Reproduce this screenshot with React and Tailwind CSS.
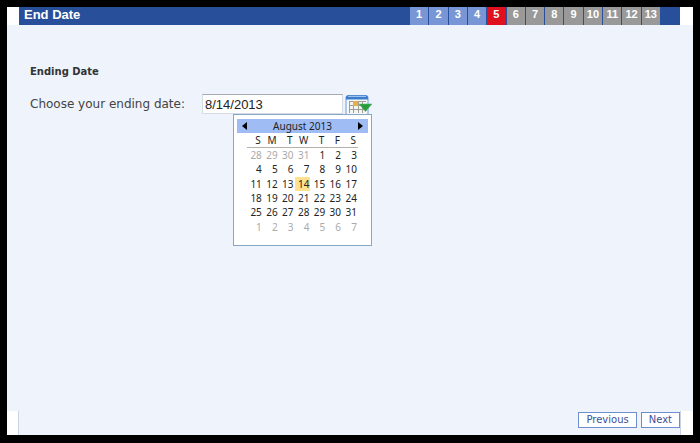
import { useState } from "react";

const STEPS = [1, 2, 3, 4, 5, 6, 7, 8, 9, 10, 11, 12, 13];
const CURRENT_STEP = 5;

const WEEKDAYS = ["S", "M", "T", "W", "T", "F", "S"];
const WEEKS = [
  [28, 29, 30, 31, 1, 2, 3],
  [4, 5, 6, 7, 8, 9, 10],
  [11, 12, 13, 14, 15, 16, 17],
  [18, 19, 20, 21, 22, 23, 24],
  [25, 26, 27, 28, 29, 30, 31],
  [1, 2, 3, 4, 5, 6, 7],
];

function stepColor(step) {
  if (step === CURRENT_STEP) return "bg-[#e0101f]";
  return step < CURRENT_STEP ? "bg-[#7896d5]" : "bg-[#999999]";
}

function isOutside(week, day) {
  return (week === 0 && day > 7) || week === 5;
}

function CalendarIcon() {
  return (
    <svg width="28" height="20" viewBox="0 0 28 20" aria-hidden="true">
      <rect x="1" y="1.5" width="22" height="21" rx="2" fill="#f4f8fd" stroke="#6f9fd8" />
      <path d="M1 5.5V3.5q0-2 2-2h18q2 0 2 2v2z" fill="#3d7cca" />
      <path d="M3 2.5h18" stroke="#9cc3ef" />
      <rect x="4" y="7" width="17" height="12" fill="#9c9d98" />
      <path
        d="M5 8h3v3H5zM14 8h3v3h-3zM18 8h3v3h-3zM5 12h3v3H5zM9 12h4v3H9zM14 12h3v3h-3zM5 16h3v3H5zM9 16h4v3H9zM14 16h3v3h-3zM18 16h3v3h-3z"
        fill="#f4f4f2"
      />
      <rect x="8" y="7" width="5" height="5" fill="#e9ae45" />
      <path d="M14 10h13l-6.500 7.500z" fill="#279b3b" stroke="#5db868" strokeWidth="0.6" />
    </svg>
  );
}

function Calendar({ selected, onSelect }) {
  return (
    <div className="absolute top-full left-[31px] h-[132px] w-[139px] border border-[#88a6c6] bg-white px-[3px] pt-1 font-['Noto_Sans',sans-serif] text-[10px] leading-[14px] text-[#222222]">
      <div className="flex h-[14px] items-center justify-between bg-[#a0bcf5] px-[5px]">
        <button type="button" aria-label="Previous month">
          <svg width="5" height="8" viewBox="0 0 5 8" aria-hidden="true">
            <path d="M5 0v8L0 4z" fill="#000000" />
          </svg>
        </button>
        <span>August 2013</span>
        <button type="button" aria-label="Next month">
          <svg width="5" height="8" viewBox="0 0 5 8" aria-hidden="true">
            <path d="M0 0v8l5-4z" fill="#000000" />
          </svg>
        </button>
      </div>
      <table className="ml-[10px] h-[101px] w-[111px] table-fixed border-collapse">
        <thead>
          <tr className="border-b border-[#b5b0a8]">
            {WEEKDAYS.map((name, i) => (
              <th key={i} className="p-0 pr-0.5 text-right font-normal">{name}</th>
            ))}
          </tr>
        </thead>
        <tbody>
          {WEEKS.map((days, week) => (
            <tr key={week}>
              {days.map((day) => {
                const outside = isOutside(week, day);
                const active = !outside && day === selected;
                return (
                  <td key={day} className={active ? "bg-[#ffe18e] p-0" : "p-0"}>
                    <button
                      type="button"
                      onClick={() => !outside && onSelect(day)}
                      className={`block w-full pr-px text-right ${outside ? "text-[#aaaaaa]" : ""}`}
                    >
                      {day}
                    </button>
                  </td>
                );
              })}
            </tr>
          ))}
        </tbody>
      </table>
    </div>
  );
}

export default function App() {
  const [day, setDay] = useState(14);

  return (
    <div className="flex min-h-screen flex-col bg-black px-[7px] pt-[7px] pb-2 font-['DejaVu_Sans',Verdana,sans-serif]">
      <header className="bg-white pr-[13px] pl-3">
        <div className="flex h-[18px] items-stretch justify-between bg-[#284f99] pr-5 pl-[5px] font-['Liberation_Sans',Arial,sans-serif] font-bold text-white">
          <h1 className="text-[13px] leading-4">End Date</h1>
          <ol className="grid w-[250px] grid-cols-13 gap-px text-center text-[11px] leading-[14px]">
            {STEPS.map((step) => (
              <li key={step} className={stepColor(step)}>{step}</li>
            ))}
          </ol>
        </div>
      </header>

      <main className="flex-1 bg-[#eef3fc] pt-[41px] pl-[23px]">
        <h2 className="text-[10px] leading-3 font-bold text-[#333333]">Ending Date</h2>
        <div className="mt-4 flex h-5 items-center">
          <label htmlFor="ending-date" className="w-[172px] text-[12px] text-[#444444]">
            Choose your ending date:
          </label>
          <div className="relative flex h-5 items-center">
            <input
              id="ending-date"
              type="text"
              readOnly
              value={`8/${day}/2013`}
              className="h-5 w-[141px] border border-[#d5dae3] border-t-[#a5abb5] bg-white px-0.5 font-['Liberation_Sans',Arial,sans-serif] text-[13px] text-[#222222]"
            />
            <button type="button" aria-label="Open calendar" className="ml-0.5">
              <CalendarIcon />
            </button>
            <Calendar selected={day} onSelect={setDay} />
          </div>
        </div>
      </main>

      <footer className="bg-[#eef3fc]">
        <div className="border-r-[12px] border-l-[11px] border-white">
          <div className="flex h-6 items-start justify-end gap-1 border-x border-[#c8d3e8] pt-px text-[10px] leading-[14px] text-[#3b519b]">
            <button type="button" className="border border-[#6d8fd0] bg-white px-[7px]">Previous</button>
            <button type="button" className="border border-[#6d8fd0] bg-white px-[7px]">Next</button>
          </div>
        </div>
      </footer>
    </div>
  );
}
